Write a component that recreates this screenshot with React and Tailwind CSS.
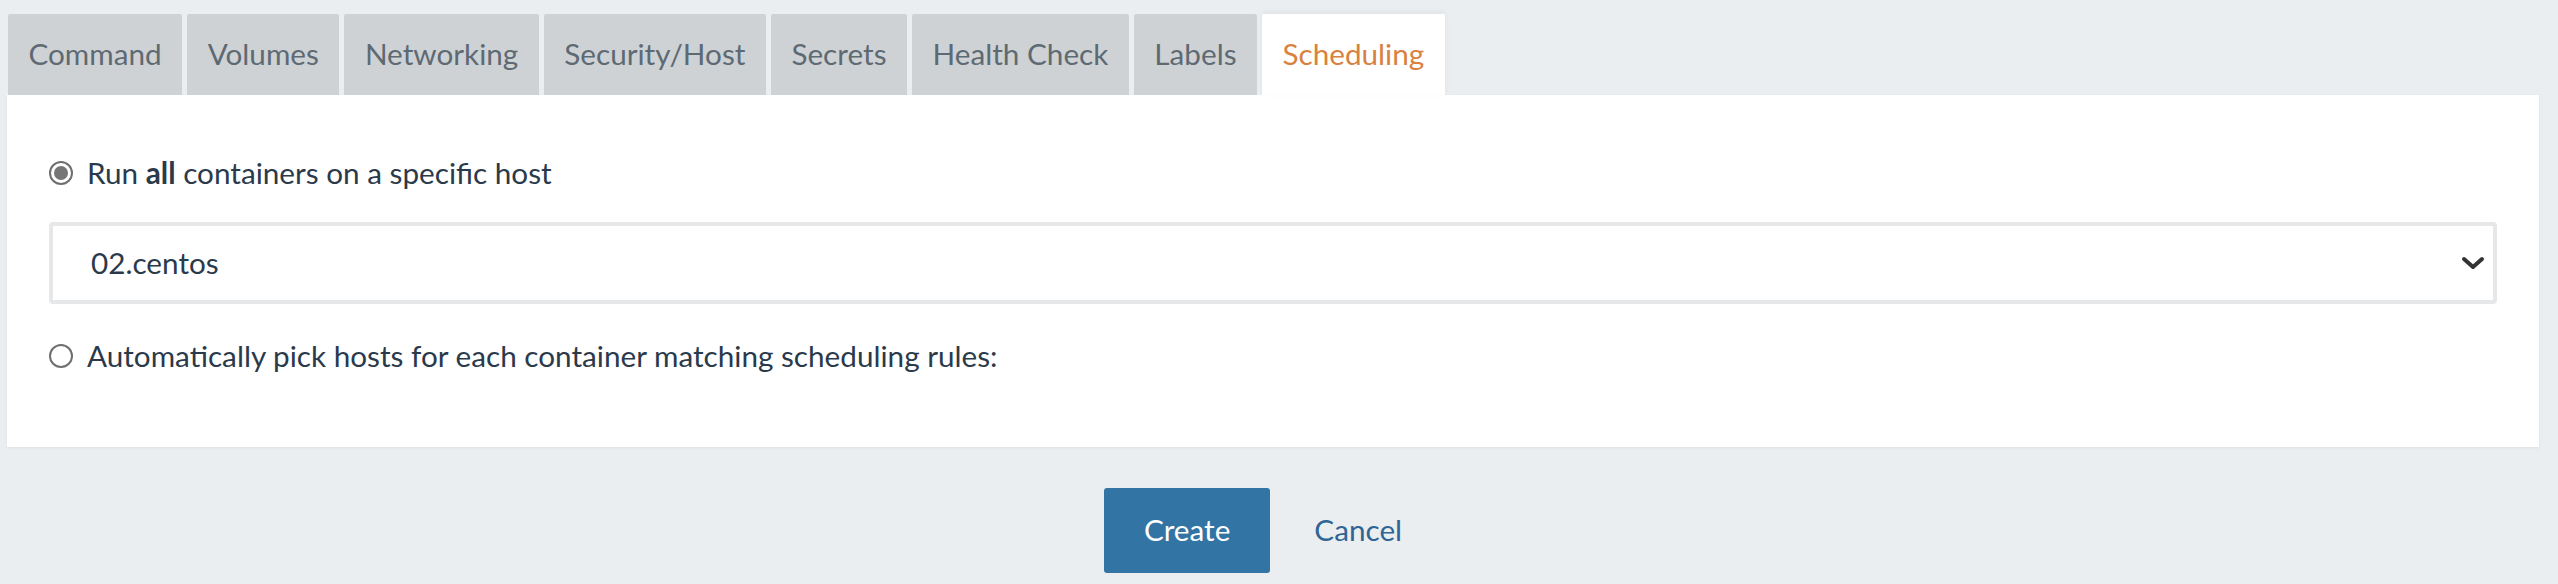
import React from 'react';

const tabs = ['Command', 'Volumes', 'Networking', 'Security/Host', 'Secrets', 'Health Check', 'Labels', 'Scheduling'];

const Radio = ({ checked }) => (
  <span className="w-[24px] h-[24px] rounded-full border-2 border-[#6f6f6f] bg-white flex items-center justify-center shrink-0">
    {checked && <span className="w-[14px] h-[14px] rounded-full bg-[#767676]" />}
  </span>
);

export default function App() {
  return (
    <div className="w-[2558px] h-[584px] bg-[#ebeef0] font-['Lato',sans-serif] text-[29.7px] pl-[7px] pr-[19px] pt-[14px] overflow-hidden">
      <div className="flex gap-[5px] pl-[1px] h-[81px]">
        {tabs.map((t) => {
          const active = t === 'Scheduling';
          return (
            <div
              key={t}
              className={`px-[20.5px] flex items-center rounded-t-[2px] ${
                active ? 'bg-white text-[#d9823f] shadow-[0_-2px_6px_rgba(0,0,0,0.05)]' : 'bg-[#ced2d5] text-[#5e6a73]'
              }`}
            >
              {t}
            </div>
          );
        })}
      </div>

      <div className="bg-white h-[352px] px-[42px] pt-[58px] text-[#2b3a4b] shadow-[0_1px_3px_rgba(0,0,0,0.06)]">
        <label className="flex items-center gap-[14px] h-[40px]">
          <Radio checked />
          <span>
            Run <b className="font-bold">all</b> containers on a specific host
          </span>
        </label>

        <div className="mt-[29px] h-[82px] border-[4px] border-[#e6e7e8] rounded-[4px] flex items-center justify-between pl-[38px] pr-[8px]">
          <span className="text-[#2b3a4b]">02.centos</span>
          <svg width="24" height="16" viewBox="0 0 24 16" fill="none">
            <path d="M3 4l9 8 9-8" stroke="#333" strokeWidth="4" strokeLinecap="round" strokeLinejoin="round" />
          </svg>
        </div>

        <label className="flex items-center gap-[14px] h-[40px] mt-[32px]">
          <Radio />
          <span>Automatically pick hosts for each container matching scheduling rules:</span>
        </label>
      </div>

      <div className="flex justify-center items-center gap-[4px] mt-[41px]">
        <button className="h-[85px] px-[40px] bg-[#3274a4] text-white rounded-[3px]">Create</button>
        <button className="h-[85px] px-[40px] text-[#2e6596]">Cancel</button>
      </div>
    </div>
  );
}
